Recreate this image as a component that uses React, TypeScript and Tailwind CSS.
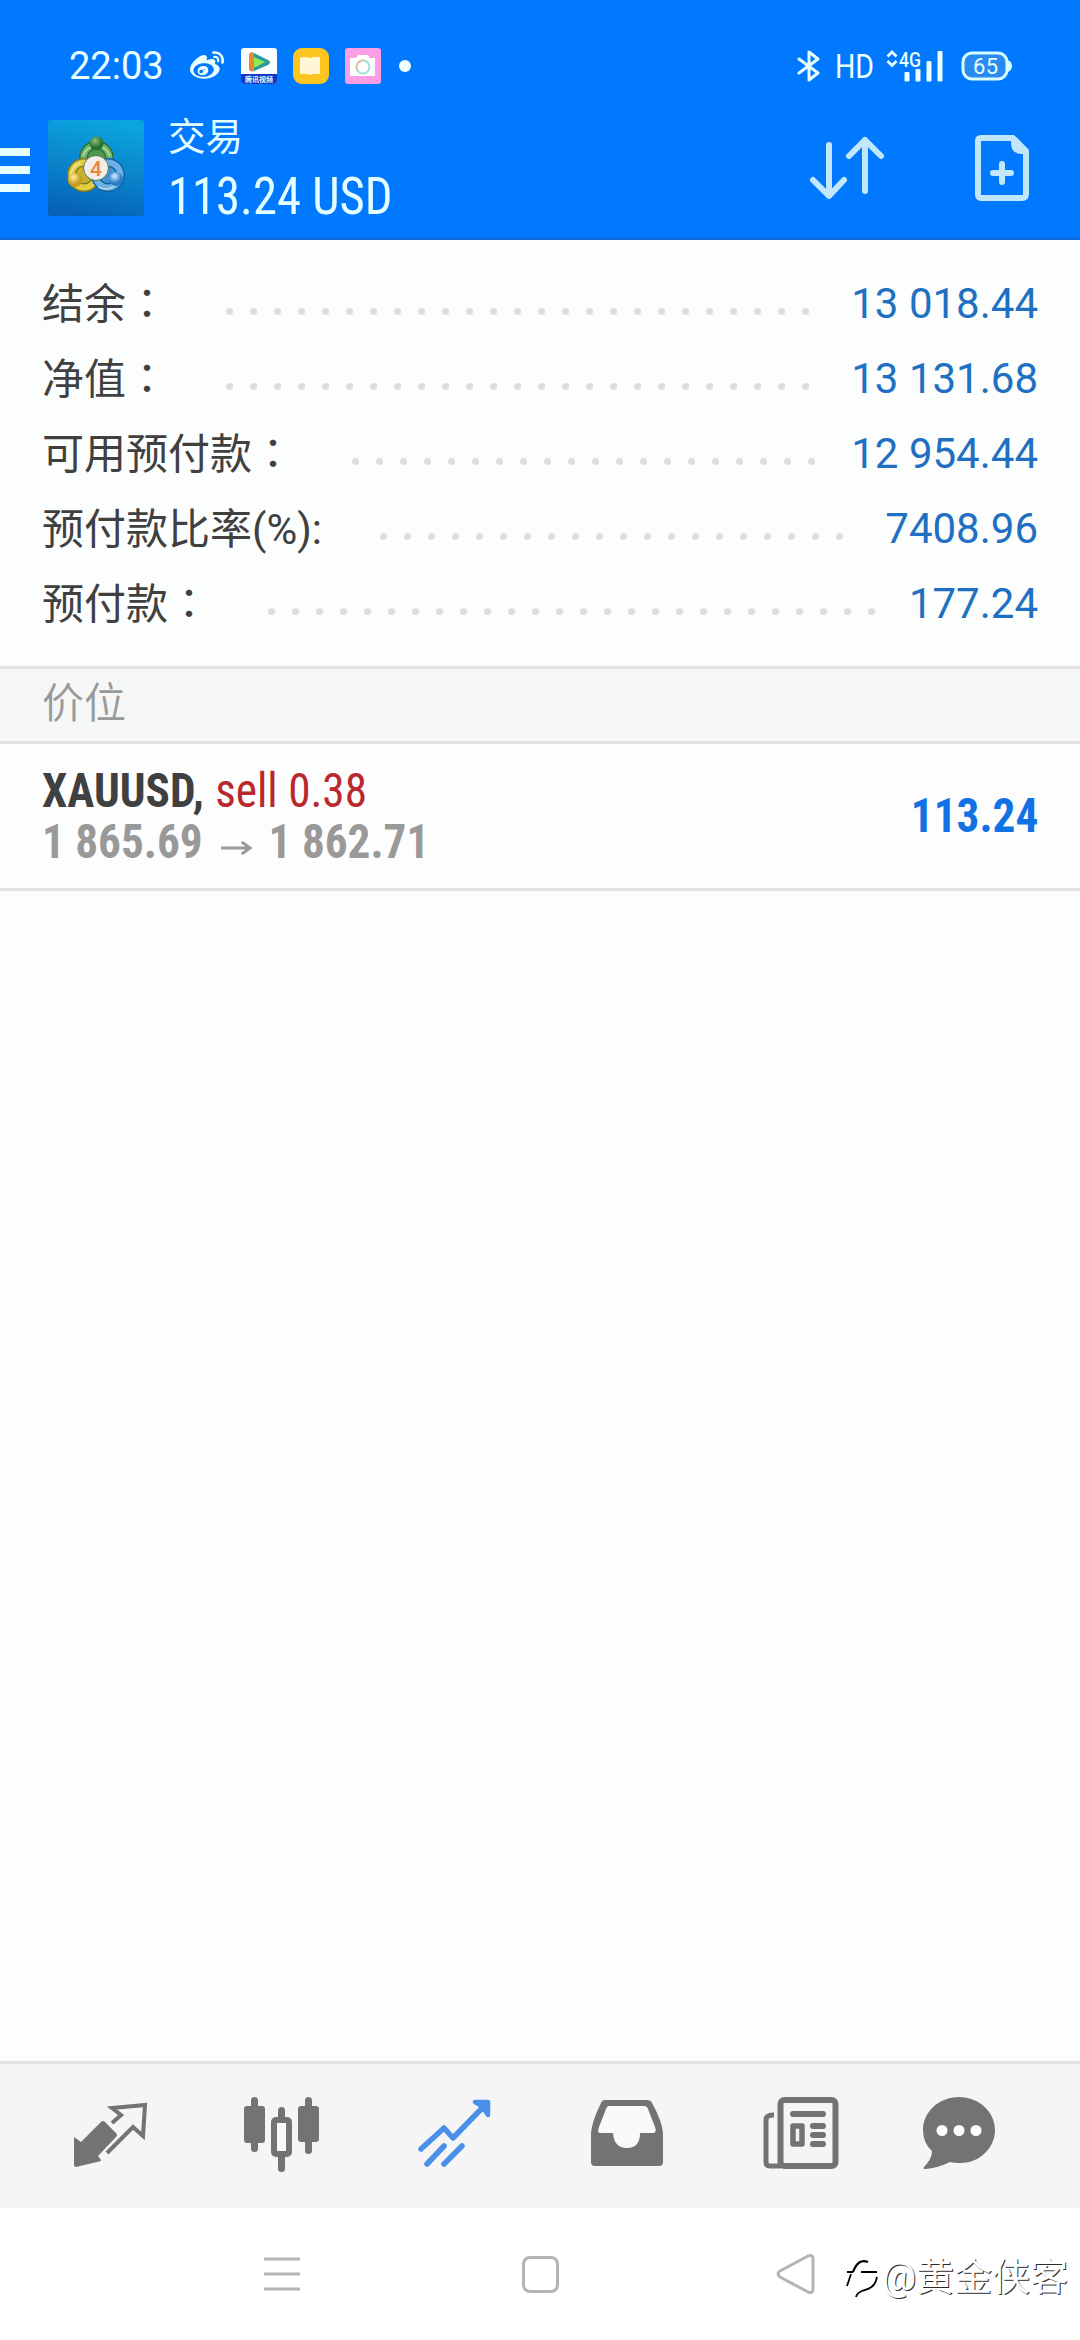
import React from 'react';
import { FaWeibo } from 'react-icons/fa';

const accountRows = [
  { label: '结余', colon: '：', value: '13 018.44', dots: 25 },
  { label: '净值', colon: '：', value: '13 131.68', dots: 25 },
  { label: '可用预付款', colon: '：', value: '12 954.44', dots: 20 },
  { label: '预付款比率(%):', colon: '', value: '7408.96', dots: 20 },
  { label: '预付款', colon: '：', value: '177.24', dots: 26 },
];

function StatusBar() {
  return (
    <div className="flex h-[108px] items-center pt-[24px] text-[#eaffff]">
      <span className="ml-[69px] w-[121px] whitespace-nowrap text-[38px] leading-none">22:03</span>
      <FaWeibo className="h-[34px] w-[34px]" />

      {/* Notification icons */}
      <svg className="ml-[17px]" width="36" height="36" viewBox="0 0 36 36">
        <rect width="36" height="36" rx="3" fill="#fbffff" />
        <path d="M0 26h36v7a3 3 0 0 1-3 3H3a3 3 0 0 1-3-3z" fill="#1338c8" />
        <path d="M8 8q0-5 5-3l14 7q4 2 0 5l-14 6q-5 1-5-3z" fill="#2c9a9c" />
        <path d="M8 8q0-5 5-3v18q-5 1-5-3z" fill="#e58a2c" />
        <path d="M13 9l11 5-11 6z" fill="#8ee84f" />
        <text x="4" y="33.500" fontSize="7" fontWeight="700" textLength="28" fill="#dff" fontFamily="Noto Sans CJK SC">腾讯视频</text>
      </svg>
      <svg className="ml-4" width="36" height="36" viewBox="0 0 36 36">
        <rect width="36" height="36" rx="9" fill="#fcc520" />
        <path d="M7 10q5-2 10 0 5-2 10-1v17q-5-1-10 1-5-2-10-1z" fill="#fff6d6" />
      </svg>
      <svg className="ml-4" width="36" height="36" viewBox="0 0 36 36">
        <rect width="36" height="36" rx="3" fill="#fb9ee6" />
        <path d="M5 10h6l2-3h10l2 3h5v18H5z" fill="#fff" />
        <circle cx="18" cy="19" r="6.500" fill="none" stroke="#9be0dc" strokeWidth="2" />
        <path d="M12 21a6.500 6.500 0 0 1 6-8.500" fill="none" stroke="#f3c3a0" strokeWidth="2" />
      </svg>
      <span className="ml-[18px] h-3 w-3 rounded-full bg-[#f2ffff]" />

      <div className="ml-auto flex items-center pr-[68px]">
        <svg width="24" height="32" viewBox="0 0 24 32" fill="none" stroke="currentColor" strokeWidth="3" strokeLinejoin="round" strokeLinecap="round">
          <path d="M2 9l19 14-9 7V2l9 7L2 23" />
        </svg>
        <span className="ml-[14px] w-[39px] origin-left scale-x-[0.84] whitespace-nowrap text-[34px] leading-none">HD</span>
        <svg className="ml-[12px] overflow-visible" width="58" height="32" viewBox="0 0 58 32" fill="currentColor">
          <path d="M1.500 6.500L6 2l4.500 4.500M1.500 11L6 15.500l4.500-4.500" fill="none" stroke="currentColor" strokeWidth="2.800" />
          <text x="13" y="16.500" fontSize="21" textLength="22" lengthAdjust="spacingAndGlyphs" fontFamily="Roboto" fontWeight="500">4G</text>
          <rect x="18.500" y="22" width="5" height="9.500" rx="1" />
          <rect x="29.500" y="19" width="5" height="12.500" rx="1" />
          <rect x="40.500" y="11" width="5" height="20.500" rx="1" />
          <rect x="51.500" y="1" width="5" height="30.500" rx="1" />
        </svg>
        <svg className="ml-[17px]" width="51" height="30" viewBox="0 0 51 30">
          <rect x="2" y="2" width="44" height="26" rx="9" fill="#2a8af0" stroke="#d8ffff" strokeWidth="3" />
          <path d="M47 9q4 2 4 6t-4 6z" fill="#d8ffff" />
          <text x="12" y="23" fontSize="22" textLength="25" fill="#e4ffff" fontFamily="Roboto">65</text>
        </svg>
      </div>
    </div>
  );
}

function AppLogo() {
  return (
    <svg className="ml-[18px] shrink-0" width="96" height="96" viewBox="0 0 96 96">
      <defs>
        <linearGradient id="logo-bg" x1="0.600" y1="0" x2="0.400" y2="1">
          <stop offset="0" stopColor="#0aa5e0" />
          <stop offset="0.500" stopColor="#0a85cc" />
          <stop offset="1" stopColor="#0562b4" />
        </linearGradient>
        <radialGradient id="ball-green" cx="0.4" cy="0.3">
          <stop offset="0" stopColor="#8fc07a" />
          <stop offset="1" stopColor="#26702e" />
        </radialGradient>
        <radialGradient id="ball-yellow" cx="0.4" cy="0.3">
          <stop offset="0" stopColor="#fff0a0" />
          <stop offset="1" stopColor="#c79a1c" />
        </radialGradient>
        <radialGradient id="ball-blue" cx="0.4" cy="0.3">
          <stop offset="0" stopColor="#d2efff" />
          <stop offset="1" stopColor="#2c7cc4" />
        </radialGradient>
      </defs>
      <rect width="96" height="96" rx="3" fill="url(#logo-bg)" />
      {/* Three interlocked figures */}
      <g>
        <circle cx="48.500" cy="38" r="13" fill="#4d9a50" stroke="#2b6a3a" strokeWidth="9" />
        <circle cx="48.500" cy="38" r="13" fill="none" stroke="#6fb56a" strokeWidth="6" />
        <circle cx="36" cy="55" r="12.500" fill="#c9b030" stroke="#7d7a22" strokeWidth="9" />
        <circle cx="36" cy="55" r="12.500" fill="none" stroke="#e3cd45" strokeWidth="6" />
        <circle cx="60" cy="55" r="12.500" fill="#3f92d4" stroke="#1560a4" strokeWidth="9" />
        <circle cx="60" cy="55" r="12.500" fill="none" stroke="#6ab2e8" strokeWidth="6" />
      </g>
      <path d="M35 36a14 14 0 0 1 27 0M23 58a14 14 0 0 1 9-15M50 67a15 15 0 0 0 22-10" fill="none" stroke="#e4f6d0" strokeOpacity="0.600" strokeWidth="1.500" />
      <circle cx="48.500" cy="23.500" r="7" fill="url(#ball-green)" />
      <circle cx="27" cy="60" r="7" fill="url(#ball-yellow)" />
      <circle cx="68" cy="59" r="7" fill="url(#ball-blue)" />
      <circle cx="48" cy="48" r="12.500" fill="#f4ece8" stroke="#4c7a50" strokeWidth="1" />
      <text x="48" y="55.500" fontSize="21" textAnchor="middle" fill="#e8873a" fontFamily="Roboto" fontWeight="500">4</text>
    </svg>
  );
}

function Header() {
  return (
    <header className="h-[240px] border-b-[3px] border-[#0a6ce0] bg-[#0079ff]">
      <StatusBar />
      <div className="flex h-[120px] items-center">
        <div className="mt-[4px] flex w-[30px] shrink-0 flex-col gap-[10px]">
          <span className="h-2 bg-[#e8ffff]" />
          <span className="h-2 bg-[#e8ffff]" />
          <span className="h-2 bg-[#e8ffff]" />
        </div>
        <AppLogo />
        <div className="ml-6 flex flex-col pt-[4px] text-[#e4ffff]">
          <h1 className="text-[37.5px] leading-[52px] font-normal">交易</h1>
          <p className="origin-left scale-x-[0.945] text-[51.5px] leading-[67px] whitespace-nowrap [font-stretch:75%]">113.24 USD</p>
        </div>
        <div className="ml-auto flex items-center pr-[50px]">
          <svg width="76" height="66" viewBox="0 0 76 66" fill="none" stroke="#c2e7fb" strokeWidth="6" strokeLinecap="round" strokeLinejoin="round">
            <path d="M21 10v50M5 45l16 16 15-16" />
            <path d="M57 56V5M41 21L57 5l16 16" />
          </svg>
          <svg className="ml-[90px]" width="56" height="68" viewBox="0 0 56 68" fill="none" stroke="#c2e7fb" strokeWidth="6" strokeLinejoin="round" strokeLinecap="round">
            <path d="M7 4h32l13 13v43q0 4-4 4H7q-3 0-3-4V7q0-3 3-3z" />
            <path d="M38 5l14 14h-4q-10 0-10-10z" fill="#c2e7fb" strokeWidth="2" />
            <path d="M28 30v18M19 39h18" />
          </svg>
        </div>
      </div>
    </header>
  );
}

function AccountSummary() {
  return (
    <section className="flex h-[426px] flex-col px-[42px] pt-[26px]">
      {accountRows.map((row) => (
        <div key={row.label} className="flex h-[75px] items-center text-[42px]">
          <span className="-mt-[3px] whitespace-nowrap text-[#404040]">
            {row.label}
            <span className="font-['Noto_Sans_CJK_TC',sans-serif]">{row.colon}</span>
          </span>
          <span className="flex gap-[17px] pt-[15px] pl-[58px]">
            {Array.from({ length: row.dots }, (_, i) => (
              <i key={i} className="block h-[7px] w-[7px] rounded-full bg-[#dedede]" />
            ))}
          </span>
          <span className="ml-auto whitespace-nowrap text-[#1f70c2]">{row.value}</span>
        </div>
      ))}
    </section>
  );
}

function Position() {
  return (
    <div className="flex h-[147px] items-center justify-between border-b-[3px] border-[#e2e2e2] bg-[#fdfdfd] px-[42px] [font-stretch:75%]">
      <div className="origin-left scale-x-[0.942] whitespace-nowrap">
        <div className="flex h-[51px] items-center text-[48px] leading-none">
          <span className="font-bold text-[#404040]">XAUUSD,</span>
          <span className="ml-[12px] font-[450] text-[#b9282d]">sell 0.38</span>
        </div>
        <div className="flex h-[51px] items-center text-[48px] leading-none font-bold text-[#999999]">
          <span>1 865.69</span>
          <svg className="mx-[18px] mt-3" width="34" height="18" viewBox="0 0 34 18" fill="none" stroke="currentColor" strokeWidth="3">
            <path d="M1 9h31M23 3l9 6-9 6" />
          </svg>
          <span>1 862.71</span>
        </div>
      </div>
      <span className="origin-right scale-x-[0.942] text-[48px] leading-none font-bold text-[#1272e4]">113.24</span>
    </div>
  );
}

function TabBar() {
  return (
    <nav className="flex h-[147px] items-start border-t-[3px] border-[#e2e2e2] bg-[#f5f5f5] pt-[30px] pl-6 text-[#737373]">
      <div className="flex w-[172px] justify-center">
        <svg width="80" height="80" viewBox="0 0 80 80">
          <path d="M4 43l7 5 20-20q2-2 4 0l11 11q2 2 0 4L28 62q3 3 3 5L6 73q-2 0-2-2z" fill="currentColor" />
          <path d="M42 29l9-8-9-7 33-3-2 31-10-9-26 26" fill="none" stroke="currentColor" strokeWidth="4" />
        </svg>
      </div>
      <div className="flex w-[172px] justify-center">
        <svg width="80" height="80" viewBox="0 0 80 80" fill="currentColor">
          <rect x="9" y="3" width="7" height="55" rx="3.500" />
          <rect x="2" y="12" width="21" height="37" rx="3" />
          <rect x="63" y="3" width="7" height="57" rx="3.500" />
          <rect x="56" y="12" width="21" height="36" rx="3" />
          <rect x="36" y="13" width="7" height="65" rx="3.500" />
          <rect x="32" y="26" width="15" height="34" rx="2" fill="#f8f8f8" stroke="currentColor" strokeWidth="6" />
        </svg>
      </div>
      <div className="flex w-[172px] justify-center">
        <svg width="80" height="80" viewBox="0 0 80 80" fill="none" stroke="#4a90e8" strokeWidth="5.500" strokeLinecap="round" strokeLinejoin="round">
          <path d="M7 55l23-21 9 10L73 9" />
          <path d="M61 8h13v13l-4-6-4-4z" fill="#4a90e8" strokeWidth="4.500" />
          <path d="M13 70l17-18M30 70l18-18" />
        </svg>
      </div>
      <div className="ml-[1px] flex w-[172px] justify-center">
        <svg width="80" height="80" viewBox="0 0 80 80">
          <path d="M18 6h42q4 0 5 3 10 18 11 30v29q0 4-4 4H8q-4 0-4-4V39Q5 27 14 9q1-3 4-3z" fill="currentColor" />
          <path d="M22 12h35q3 0 4 3l7 18q2 6-2 6H53q0 15-13 15T26 39H13q-3 0-1-6l7-18q1-3 3-3z" fill="#fafafa" />
        </svg>
      </div>
      <div className="ml-[1px] flex w-[172px] justify-center">
        <svg width="80" height="80" viewBox="0 0 80 80" fill="none" stroke="currentColor">
          <rect x="20.500" y="6" width="55" height="66" rx="4" strokeWidth="6" />
          <path d="M14 21h-1q-7 0-7 5v42q0 4 4 4h11" strokeWidth="5" />
          <path d="M33 20h30M53 32h10M53 41h10M53 50h10" strokeWidth="6" strokeLinecap="round" />
          <rect x="33" y="32" width="9" height="18" strokeWidth="5.500" strokeLinejoin="round" />
        </svg>
      </div>
      <div className="flex w-[146px] justify-center">
        <svg width="80" height="80" viewBox="0 0 80 80">
          <path d="M40 3c20 0 36 15 36 33S60 70 40 69q-5 0-9-1-12 6-25 7-2 0-1-2 8-8 8-16Q4 49 4 36C4 18 20 3 40 3z" fill="currentColor" />
          <circle cx="23" cy="36.500" r="5.500" fill="#fff" />
          <circle cx="40" cy="36.500" r="5.500" fill="#fff" />
          <circle cx="57" cy="36.500" r="5.500" fill="#fff" />
        </svg>
      </div>
    </nav>
  );
}

function SystemNav() {
  return (
    <div className="relative flex h-[132px] items-center bg-white pl-[264px] text-[#b4b4b4]">
      <svg width="36" height="36" viewBox="0 0 36 36" stroke="currentColor" strokeWidth="3">
        <path d="M0 3h36M0 18h36M0 33h36" />
      </svg>
      <span className="ml-[222px] h-[37px] w-[37px] rounded-[8px] border-[3px] border-current" />
      <svg className="ml-[217px]" width="40" height="42" viewBox="0 0 40 42" fill="none" stroke="currentColor" strokeWidth="3" strokeLinejoin="round">
        <path d="M4 18L32 3q5-2 5 3v30q0 5-5 3L4 24q-4-3 0-6z" />
      </svg>

      {/* Author mark over the corner */}
      <div className="absolute top-[46px] left-[845px] flex items-center text-[38px] leading-[44px] whitespace-nowrap text-white [text-shadow:1px_1px_0px_#2a2a2a]">
        <svg width="37" height="46" viewBox="0 0 37 46" fill="none" stroke="#000">
          <path d="M8 18q5-14 15-10M2 18h6M16 18h16" strokeWidth="2.200" />
          <path d="M6 20L2 32M32 23c-2 11-9 12-15 14q-5 2-6 6" strokeWidth="1.800" />
        </svg>
        <span>@黄金侠客</span>
      </div>
    </div>
  );
}

export default function App() {
  return (
    <div className="flex h-[2340px] w-[1080px] flex-col overflow-hidden bg-[#fcfdfd] font-['Roboto','Noto_Sans_CJK_SC',sans-serif]">
      <Header />
      <AccountSummary />
      <div className="flex h-[78px] items-center border-y-[3px] border-[#e2e2e2] bg-[#f5f6f6] px-[42px] pb-[4px] text-[42px] font-[350] text-[#999999]">
        价位
      </div>
      <Position />
      <main className="flex-1" />
      <TabBar />
      <SystemNav />
    </div>
  );
}
